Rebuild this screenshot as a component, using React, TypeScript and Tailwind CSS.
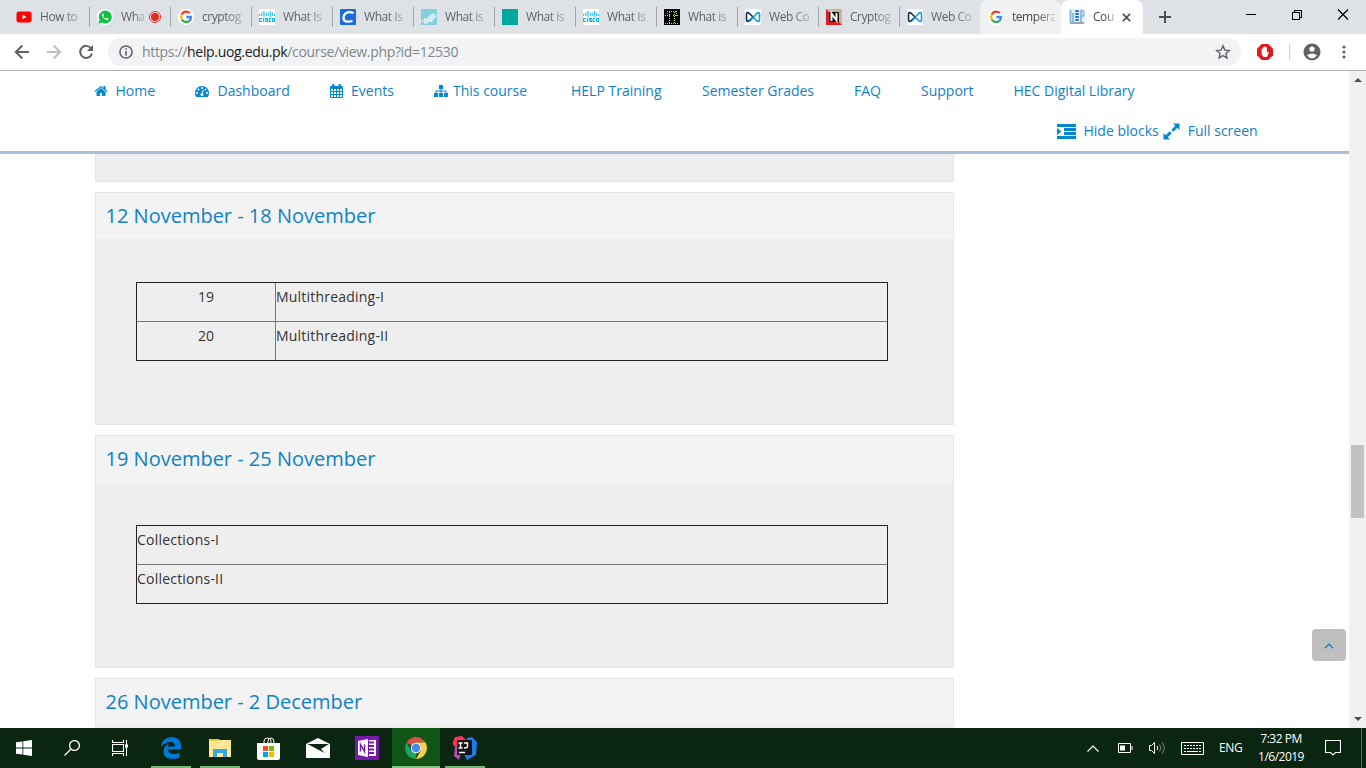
import React from "react";

const G = () => (
  <svg width="16" height="16" viewBox="0 0 16 16" className="shrink-0">
    <circle cx="8" cy="8" r="8" fill="#fff" />
    <g fill="none" strokeWidth="2.3">
      <path d="M11.7 4.1A5 5 0 0 0 3.7 5.5" stroke="#ea4335" />
      <path d="M3.7 5.5A5 5 0 0 0 3.7 10.5" stroke="#fbbc05" />
      <path d="M3.7 10.5A5 5 0 0 0 11.3 11.8" stroke="#34a853" />
      <path d="M11.3 11.8A5 5 0 0 0 13 8H8.3" stroke="#4285f4" />
    </g>
  </svg>
);
const Cisco = () => (
  <svg width="16" height="16" viewBox="0 0 16 16" className="shrink-0">
    <rect width="16" height="16" fill="#fff" />
    <path d="M.7 5v2M2.9 3.5V7M5 2v6M7.200 3.500V7M9.200 3.500V7M11.300 2v6M13.300 3.500V7M15.400 5v2" stroke="#10b4e0" strokeWidth="1" />
    <path d="M3 9.500H.700v3H3M4.700 9v4M9 9.500H6.700v1.500H8.500v1.500H6.300M12 9.500h-1.800v3H12M13.500 9.500h2v3h-2z" stroke="#10b4e0" strokeWidth="1.200" fill="none" />
  </svg>
);
const Web = () => (
  <svg width="16" height="16" viewBox="0 0 16 16" className="shrink-0">
    <rect width="16" height="16" fill="#fff" />
    <path d="M8 8 4.500 4.500Q1.500 2.500 1.500 5v6q0 2.500 3 .5L8 8" stroke="#0c2f55" strokeWidth="1.600" fill="none" />
    <path d="M5 12 11.500 4.500Q14.500 2.500 14.500 5v6q0 2.500-3 .5L8 8" stroke="#189bd7" strokeWidth="1.600" fill="none" />
  </svg>
);
const YT = () => (
  <svg width="16" height="16" viewBox="0 0 16 16" className="shrink-0">
    <rect x=".5" y="2.500" width="15" height="11" rx="2.500" fill="#f00" />
    <path d="M6.500 5.700v4.600L10.500 8z" fill="#fff" />
  </svg>
);
const WA = () => (
  <svg width="16" height="16" viewBox="0 0 16 16" className="shrink-0">
    <circle cx="8" cy="8" r="8" fill="#fff" />
    <path d="M1.500 14.500 2.600 11A6.500 6.500 0 1 1 5.200 13.600z" fill="#12c143" />
    <path d="M5.800 4.600c-1.600 1.200-.5 3.300 1.200 5s3.600 2.400 4.500 1l-.1-1-1.700-.8-1 .9c-1.200-.4-2.100-1.300-2.500-2.400l.8-.8-.7-1.800z" fill="#fff" />
  </svg>
);
const CIcon = () => (
  <svg width="16" height="16" viewBox="0 0 16 16" className="shrink-0">
    <rect width="16" height="16" rx="1" fill="#1b6ddb" />
    <path d="M13.500 4C8 1.800 4 4 3.500 8.500c-.3 4 3.500 5 9 3.500" stroke="#fff" strokeWidth="2.300" fill="none" />
  </svg>
);
const Wave = () => (
  <svg width="16" height="16" viewBox="0 0 16 16" className="shrink-0">
    <rect width="16" height="16" rx="1" fill="#84d0dc" />
    <path d="M1.500 11.500v1M3.800 10v4M6 9.500V14M8 8v4.500M10 6v6.500M12 5v6M14 6v2.500" stroke="#fff" strokeWidth="1.300" strokeLinecap="round" fill="none" />
  </svg>
);
const Teal = () => <span className="h-4 w-4 shrink-0 bg-[#00a99d]" />;
const Dots = () => (
  <svg width="16" height="16" viewBox="0 0 16 16" className="shrink-0">
    <rect width="16" height="16" fill="#000" />
    <g stroke="#c9dc2b" strokeWidth="1" strokeDasharray="1 1" fill="none">
      <path d="M3 2.500h10M1 6.500h5M9 6.500h6M1 14.500h14M5.500 3v11M10.500 3v11M12.500 2v5M3.500 2v5" />
    </g>
  </svg>
);
const NIcon = () => (
  <svg width="16" height="16" viewBox="0 0 16 16" className="shrink-0">
    <rect width="16" height="16" fill="#c9b69d" />
    <path d="M0 0v16h16z" fill="#d8202a" />
    <rect x="3" y="3" width="10" height="10" fill="#111" />
    <path d="M5.500 12V4.500l5 7V4" stroke="#fff" strokeWidth="2" fill="none" />
  </svg>
);
const Help = () => (
  <svg width="16" height="16" viewBox="0 0 16 16" className="shrink-0">
    <rect width="16" height="14" fill="#e4f1fc" />
    <path d="M1.500 1v12M4 4v9M12 1v12" stroke="#79baf3" strokeWidth="1.800" />
    <path d="M12 2h2.500v5H12" stroke="#79baf3" strokeWidth="1.500" fill="none" />
    <path d="M8 1v12" stroke="#2277bd" strokeWidth="3.500" strokeDasharray="2 1" />
    <path d="M1 14h14" stroke="#7d8790" strokeWidth="1.500" />
  </svg>
);

const tabs: { icon: () => React.JSX.Element; text: string; rec?: boolean }[] = [
  { icon: YT, text: "How to" },
  { icon: WA, text: "Wha", rec: true },
  { icon: G, text: "cryptog" },
  { icon: Cisco, text: "What Is" },
  { icon: CIcon, text: "What Is" },
  { icon: Wave, text: "What is" },
  { icon: Teal, text: "What is" },
  { icon: Cisco, text: "What Is" },
  { icon: Dots, text: "What is" },
  { icon: Web, text: "Web Co" },
  { icon: NIcon, text: "Cryptog" },
  { icon: Web, text: "Web Co" },
];

const Label = ({ children, w }: { children: React.ReactNode; w: string }) => (
  <span className={`ml-2 shrink-0 whitespace-nowrap text-[12px] leading-4 tracking-[-0.45px] [mask-image:linear-gradient(to_right,#000_55%,rgba(0,0,0,0.25)_100%)] ${w}`}>
    {children}
  </span>
);

const TabStrip = () => (
  <div className="flex h-[34px] bg-[#dee1e6] pl-2 text-[#5f6368]">
    {tabs.map(({ icon: Icon, text, rec }, i) => (
      <div key={i} className="flex h-[34px] w-[81px] shrink-0 items-center pl-2">
        <Icon />
        <Label w={rec ? "w-[23px]" : "w-[42px]"}>{text}</Label>
        {rec && (
          <svg width="14" height="14" viewBox="0 0 14 14" className="ml-[4px] shrink-0">
            <circle cx="7" cy="7" r="5.500" fill="#fff" stroke="#d93025" />
            <circle cx="7" cy="7" r="4.200" fill="#d93025" />
          </svg>
        )}
        {i < 11 && <span className="ml-auto -mr-px h-5 w-px shrink-0 bg-[#a0a4a9]" />}
      </div>
    ))}
    <div className="flex h-[34px] w-[81px] shrink-0 items-center rounded-t-lg bg-[#eff1f3] pl-2 text-[#45494d]">
      <G />
      <Label w="w-[43px]">tempera</Label>
    </div>
    <div className="flex h-[34px] w-[82px] shrink-0 items-center rounded-t-lg bg-white pl-2 text-[#45494d]">
      <Help />
      <Label w="w-[22px]">Cou</Label>
      <svg width="9" height="9" viewBox="0 0 10 10" className="ml-[7px]" stroke="#45494d" strokeWidth="1.700"><path d="M1 1l8 8M9 1 1 9" /></svg>
    </div>
    <svg width="12" height="12" viewBox="0 0 12 12" className="ml-4 mt-[11px]" stroke="#4b4f54" strokeWidth="2"><path d="M6 0v12M0 6h12" /></svg>
    <svg width="110" height="20" viewBox="0 0 110 20" className="ml-auto mr-[15px] mt-[5px]" fill="none" stroke="#000" shapeRendering="crispEdges">
      <path d="M5 9.500h10M51.500 7.500h7v7h-7zM53.500 7V5.500h7v7H59" />
      <path d="M97 4.500l10 10M107 4.500l-10 10" strokeWidth="1.200" shapeRendering="auto" />
    </svg>
  </div>
);

const Toolbar = () => (
  <div className="flex h-9 items-center bg-white pl-[14px]">
    <svg width="16" height="16" viewBox="0 0 16 16" fill="none" stroke="#5f6368" strokeWidth="2"><path d="M15 8H2M8.300 1.500 1.800 8l6.500 6.500" /></svg>
    <svg width="16" height="16" viewBox="0 0 16 16" fill="none" stroke="#bdc0c4" strokeWidth="2" className="ml-4"><path d="M1 8h13M7.700 1.500 14.200 8l-6.500 6.500" /></svg>
    <svg width="16" height="16" viewBox="0 0 16 16" fill="none" stroke="#5f6368" strokeWidth="2" className="ml-4"><path d="M13.200 4.500A6 6 0 1 0 14 9.500" /><path d="M15 1v6H9z" fill="#5f6368" stroke="none" /></svg>
    <div className="ml-[14px] flex h-7 w-[1133px] items-center rounded-full bg-[#f1f3f4] pl-[11px] pr-[10px]">
      <svg width="14" height="14" viewBox="0 0 14 14" fill="none" stroke="#5f6368" strokeWidth="1.500"><circle cx="7" cy="7" r="6.100" /><path d="M7 3.300v1.500M7 6v4.500" strokeWidth="1.600" /></svg>
      <span className="ml-[9px] whitespace-nowrap text-[14px] leading-5 tracking-[-0.33px] text-[#80868b]">https://<span className="text-[#202124]">help.uog.edu.pk</span>/course/view.php?id=12530</span>
      <svg width="16" height="16" viewBox="0 0 16 16" className="ml-auto" fill="none" stroke="#5f6368" strokeWidth="1.400"><path d="m8 1.800 1.800 4.300 4.600.4-3.500 3 1.100 4.600L8 11.600l-4 2.500 1.100-4.600-3.500-3 4.600-.4z" /></svg>
    </div>
    <svg width="16" height="16" viewBox="0 0 16 16" className="ml-4"><path d="M4.700 0h6.600L16 4.700v6.600L11.300 16H4.700L0 11.300V4.700z" fill="#e01b20" /><path d="M4.600 8.500V5q.8-.8 1.300 0v2V3.500q.7-.8 1.300 0V7 2.700q.8-.7 1.400 0V7 3.500q.7-.7 1.300 0V9l1.300-1.400q1 0 .6.800L10 13H6.500q-1.900-1.500-1.900-4.500z" fill="#fff" /></svg>
    <span className="ml-4 h-4 w-px bg-[#cdd0d4]" />
    <svg width="18" height="18" viewBox="0 0 18 18" className="ml-[13px]"><circle cx="9" cy="9" r="8.500" fill="#5f6368" /><circle cx="9" cy="6" r="2.600" fill="#fff" /><path d="M4 12.200q5-3.400 10 0-2 3-5 3t-5-3z" fill="#fff" /></svg>
    <svg width="4" height="14" viewBox="0 0 4 14" className="ml-[21px]" fill="#5f6368"><circle cx="2" cy="2" r="1.600" /><circle cx="2" cy="7" r="1.600" /><circle cx="2" cy="12" r="1.600" /></svg>
  </div>
);

const HomeI = () => (
  <svg width="14" height="14" viewBox="0 0 1792 1792" fill="#0388d1"><path d="M1472 992v480q0 26-19 45t-45 19h-384v-384h-256v384h-384q-26 0-45-19t-19-45v-480q0-1 .5-3t.5-3l575-474 575 474q1 2 1 6zm223-69l-62 74q-8 9-21 11h-3q-13 0-21-7l-692-577-692 577q-12 8-24 7-13-2-21-11l-62-74q-8-10-7-23.500t11-21.500l719-599q32-26 76-26t76 26l244 204v-195q0-14 9-23t23-9h192q14 0 23 9t9 23v408l219 182q10 8 11 21.500t-7 23.500z" /></svg>
);
const DashI = () => (
  <svg width="14" height="14" viewBox="0 0 1792 1792" fill="#0388d1"><path d="M384 1152q0-53-37.500-90.500t-90.500-37.500-90.500 37.500-37.500 90.500 37.500 90.500 90.500 37.500 90.500-37.500 37.500-90.500zm192-448q0-53-37.500-90.500t-90.500-37.500-90.500 37.500-37.500 90.500 37.500 90.500 90.500 37.500 90.500-37.500 37.500-90.500zm428 481l101-382q6-26-7.500-48.500t-38.500-29.500-48 6.500-30 39.500l-101 382q-60 5-107 43.500t-63 98.500q-20 77 20 146t117 89 146-20 89-117q16-60-6-117t-72-91zm660-33q0-53-37.500-90.500t-90.500-37.500-90.500 37.500-37.500 90.500 37.500 90.500 90.500 37.500 90.500-37.500 37.500-90.500zm-640-640q0-53-37.500-90.500t-90.500-37.500-90.500 37.500-37.500 90.500 37.500 90.500 90.500 37.500 90.500-37.500 37.500-90.500zm448 192q0-53-37.500-90.500t-90.500-37.500-90.500 37.500-37.500 90.500 37.500 90.500 90.500 37.500 90.500-37.500 37.500-90.500zm320 448q0 261-141 483-19 29-54 29h-1402q-35 0-54-29-141-221-141-483 0-182 71-348t191-286 286-191 348-71 348 71 286 191 191 286 71 348z" /></svg>
);
const CalI = () => (
  <svg width="13" height="14" viewBox="0 0 13 14" fill="#0388d1"><path fillRule="evenodd" d="M1 2h1V1q0-1 1.200-1T4.500 1v1h4V1q0-1 1.200-1T11 1v1h1q1 0 1 1v10q0 1-1 1H1q-1 0-1-1V3q0-1 1-1zM1 5v2h2V5zM4 5v2h2V5zM7 5v2h2V5zM10 5v2h2V5zM1 8v2h2V8zM4 8v2h2V8zM7 8v2h2V8zM10 8v2h2V8zM1 11v2h2v-2zM4 11v2h2v-2zM7 11v2h2v-2zM10 11v2h2v-2z" /></svg>
);
const SiteI = () => (
  <svg width="14" height="12" viewBox="0 0 14 12" fill="#0388d1"><path d="M5 0h4v4H7.500v1.500H12q.5 0 .5.500v2H14v4h-4V8h1.500V6.500h-4V8H9v4H5V8h1.500V6.500h-4V8H4v4H0V8h1.500V6q0-.5.500-.5h4.500V4H5z" /></svg>
);

const Nav = () => (
  <header className="h-[83px] border-b-[3px] border-[#a9c1d6] bg-white text-[14px] leading-5 text-[#0f82c6]">
    <nav className="flex h-10 items-center whitespace-nowrap pl-[93.500px]">
      <div className="flex w-[101px] items-center"><HomeI /><span className="ml-2">Home</span></div>
      <div className="flex w-[135px] items-center"><DashI /><span className="ml-[9px]">Dashboard</span></div>
      <div className="flex w-[104.500px] items-center"><CalI /><span className="ml-[8.500px]">Events</span></div>
      <div className="flex w-[137px] items-center"><SiteI /><span className="ml-[5px]">This course</span></div>
      <span className="w-[131px]">HELP Training</span>
      <span className="w-[152px]">Semester Grades</span>
      <span className="w-[67px]">FAQ</span>
      <span className="w-[92.500px]">Support</span>
      <span>HEC Digital Library</span>
    </nav>
    <div className="flex h-10 items-center whitespace-nowrap pl-[1056.500px]">
      <svg width="19" height="15" viewBox="0 0 19 15" fill="#0388d1"><path d="M0 0h19v3H0zM7 4h12v3H7zM7 8h12v3H7zM0 12h19v3H0zM0 4l4.500 3.500L0 11z" /></svg>
      <span className="ml-2">Hide blocks</span>
      <svg width="17" height="17" viewBox="0 0 17 17" fill="#0388d1" className="ml-1"><path d="M10 .500h6.500V7l-2.200-2.200-4 4-2-2 4-4zM7 16.500H.500V10l2.200 2.200 4-4 2 2-4 4z" /></svg>
      <span className="ml-2">Full screen</span>
    </div>
  </header>
);

const Section = ({ title, rows }: { title: string; rows: string[][] }) => (
  <section className="mb-[10px] h-[233px] w-[859px] shrink-0 border border-[#e6e6e6] bg-[#eee]">
    <h3 className="flex h-[46px] items-center bg-[#f3f3f3] pl-[9.500px] text-[20px] leading-6 text-[#0f82c6]">{title}</h3>
    <div className="ml-[40px] mt-[43px] w-[752px] border border-[#222] text-[14px] text-[#333]">
      {rows.map((r, i) => (
        <div key={i} className={i ? "flex h-[39px] border-t border-[#777]" : "flex h-[38px]"}>
          {r.length > 1 && <span className="w-[139px] border-r border-[#777] pt-1 text-center leading-5">{r[0]}</span>}
          <span className="pt-1 leading-5 tracking-[0.21px]">{r[r.length - 1]}</span>
        </div>
      ))}
    </div>
  </section>
);

const Page = () => (
  <div className="flex h-[657px] bg-white">
    <div className="relative flex w-[1349px] flex-col">
      <Nav />
      <main className="flex h-[574px] flex-col overflow-hidden pl-[95px]">
        <div className="mb-[10px] h-7 w-[859px] shrink-0 border border-t-0 border-[#e6e6e6] bg-[#eee]" />
        <Section title="12 November - 18 November" rows={[["19", "Multithreading-I"], ["20", "Multithreading-II"]]} />
        <Section title="19 November - 25 November" rows={[["Collections-I"], ["Collections-II"]]} />
        <Section title="26 November - 2 December" rows={[]} />
      </main>
      <button className="absolute right-[3px] bottom-[67px] flex h-8 w-[34px] items-center justify-center rounded bg-[#bfbfbf]">
        <svg width="10" height="6" viewBox="0 0 10 6" fill="none" stroke="#0f82c6" strokeWidth="1.300" className="mt-[2px]"><path d="M1 5.200 5 1.200l4 4" /></svg>
      </button>
    </div>
    <div className="flex w-[17px] flex-col items-center bg-[#f1f1f1]">
      <svg width="8" height="4" viewBox="0 0 8 4" className="mt-[7px]" fill="#505050"><path d="M0 4 4 0l4 4z" /></svg>
      <div className="mt-[363px] h-[73px] w-[13px] bg-[#c1c1c1]" />
      <svg width="8" height="4" viewBox="0 0 8 4" className="mb-[7px] mt-auto" fill="#505050"><path d="M0 0 4 4l4-4z" /></svg>
    </div>
  </div>
);

const TaskItem = ({ children, on, active, w = "w-[49px]" }: { children: React.ReactNode; on?: boolean; active?: boolean; w?: string }) => (
  <div className={`flex h-10 shrink-0 flex-col items-center ${w} ${active ? "bg-[#115516]" : ""}`}>
    <div className="flex h-[38px] items-center justify-center pt-[2px]">{children}</div>
    {on && <span className={active ? "h-[2px] w-full bg-[#86c585]" : "h-[2px] w-10 bg-[#76b976]"} />}
  </div>
);

const Taskbar = () => (
  <footer className="flex h-10 bg-[#0a2610] text-white">
    <TaskItem w="w-12"><svg width="16" height="16" viewBox="0 0 16 16" fill="#fff"><path d="M0 2.300 6.500 1.400V7.600H0zM7.300 1.300 16 0v7.600H7.300zM0 8.400h6.500v6.200L0 13.700zM7.300 8.400H16V16l-8.700-1.300z" /></svg></TaskItem>
    <TaskItem w="w-12"><svg width="16" height="16" viewBox="0 0 16 16" fill="none" stroke="#fff" strokeWidth="1.300"><circle cx="10.500" cy="5.500" r="4.900" /><path d="M7 9 .500 15.500" /></svg></TaskItem>
    <TaskItem w="w-12"><svg width="17" height="16" viewBox="0 0 17 16" fill="none" stroke="#fff" strokeWidth="1.100"><path d="M.500 0v2.500h11V0M.500 16v-2.500h11V16M.500 4.500h11v7H.500zM14.500 0v16" /><path d="M13 4.500h3v3h-3z" fill="#fff" stroke="none" /></svg></TaskItem>
    <TaskItem on w="w-[54px]"><svg width="20" height="22" viewBox="0 0 20 22" fill="#0078d7"><path d="M0 10Q1 0 11 0q9 0 9 10v2.500H7q.5 4.500 6 4.500 3.500 0 5.500-1.500v4.700Q16 22 12 22 2 22 2.500 14q.3-5 6-7.800Q6.800 7.500 6.700 9.500H14q0-4.500-4.300-4.500Q3.500 5 0 10z" /></svg></TaskItem>
    <TaskItem on w="w-11"><svg width="22" height="18" viewBox="0 0 22 18"><path d="M0 0h9l2 1h11v17H0z" fill="#ffe694" /><path d="M1 0h7l1.500 1.800H1z" fill="#f5b92e" /><path d="M4 18v-8h14v8h-4v-4H8v4z" fill="#35a9df" /></svg></TaskItem>
    <TaskItem w="w-[52px]"><svg width="23" height="23" viewBox="0 0 23 23"><path d="M7 7V4q0-3 3.500-3T14 4v3M11 7V4q0-3 3-3 3 0 3 4v2" fill="none" stroke="#fff" /><path d="M0 6h23v15q0 2-2 2H2q-2 0-2-2z" fill="#fff" /><path d="M6 9h5v5H6z" fill="#f25022" /><path d="M12 9h5v5h-5z" fill="#7fba00" /><path d="M6 15h5v5H6z" fill="#00a4ef" /><path d="M12 15h5v5h-5z" fill="#ffb900" /></svg></TaskItem>
    <TaskItem w="w-[48px]"><svg width="24" height="20" viewBox="0 0 24 20" fill="#fff"><path d="M0 6 12 0l12 6v14H0z" /><path d="M1.500 6H23l-8 5 3.500 4z" fill="#0a2610" /></svg></TaskItem>
    <TaskItem w="w-[50px]"><svg width="24" height="24" viewBox="0 0 24 24"><rect width="24" height="24" fill="#7719aa" /><path d="m3 5 10-2v18L3 19z" fill="#fff" /><path d="M5.500 15.500v-7l4 7v-7" stroke="#7719aa" strokeWidth="1.500" fill="none" /><path d="M14 4h7v16h-7v-2h5v-2h-5v-1.500h5v-2h-5V11h5V9h-5V7.500h5v-2h-5z" fill="#fff" /></svg></TaskItem>
    <TaskItem on active w="w-[48px]"><svg width="22" height="22" viewBox="0 0 22 22"><path d="M11 11 1.500 5.500A11 11 0 0 1 20.500 5.500H11z" fill="#dd5144" /><path d="M11 11v11A11 11 0 0 1 1.500 5.500L6.200 13.700z" fill="#1da362" /><path d="M11 22a11 11 0 0 0 9.500-16.500H11l4.800 8.200z" fill="#ffcd46" /><circle cx="11" cy="11" r="5.200" fill="#f1f1f1" /><circle cx="11" cy="11" r="4.200" fill="#4688f1" /></svg></TaskItem>
    <TaskItem on w="w-[50px]"><svg width="24" height="24" viewBox="0 0 24 24"><path d="m2 1 7-1 5 5-9 8-6-5z" fill="#fe3159" /><path d="M2 11h8L6 24l-5-4z" fill="#b24bb5" /><path d="m14 2 5-1 5 5-1 13-9 5-3-6z" fill="#187cf0" /><path d="M4 4h15v15H4z" fill="#151515" /><path d="M5.500 7h4M7.500 7v5M5.500 12h4M11 7h3.500v3.500q0 1.500-3.500 1.500M6 16.500h6" stroke="#fff" strokeWidth="1.400" fill="none" /></svg></TaskItem>
    <div className="ml-auto flex h-10 items-center">
      <svg width="12" height="7" viewBox="0 0 12 7" fill="none" stroke="#fff" strokeWidth="1.200"><path d="M.500 6.500 6 1l5.500 5.500" /></svg>
      <svg width="15" height="10" viewBox="0 0 15 10" className="ml-[19px]" fill="none" stroke="#fff"><path d="M.500.500h12v9H.500zM14 3v4" /><path d="M2 2.500h5v5H2z" fill="#fff" stroke="none" /></svg>
      <svg width="17" height="14" viewBox="0 0 17 14" className="ml-4" fill="none" stroke="#fff"><path d="M.500 4.500h2l3-3v11l-3-3h-2zM8 5q1.500 2 0 4" /><path d="M10.500 3.500q3 3.500 0 7M13 1.500q4.500 5.500 0 11" opacity=".45" /></svg>
      <svg width="23" height="13" viewBox="0 0 23 13" className="ml-[15px]" fill="none" stroke="#fff"><path d="M.500.500h22v12H.500z" /><path d="M3 3.500h18M3 6.500h18" strokeDasharray="2 1" /><path d="M3 9.500h2M6 9.500h11M18 9.500h2" /></svg>
      <span className="ml-[15px] w-[24px] whitespace-nowrap text-[12px] tracking-[-0.4px]">ENG</span>
      <div className="ml-[13px] w-[50px] whitespace-nowrap text-center text-[12px] leading-[18px] tracking-[-0.5px]">7:32 PM<br />1/6/2019</div>
      <svg width="16" height="16" viewBox="0 0 16 16" className="ml-[19px]" fill="none" stroke="#fff" strokeWidth="1.100"><path d="M.500.500h15v12h-5L8 15l-2.500-2.500h-5z" /></svg>
      <span className="ml-5 mr-1 h-10 w-px bg-[#58705c]" />
    </div>
  </footer>
);

export default function App() {
  return (
    <div className="h-[768px] w-[1366px] overflow-hidden bg-white font-['Open_Sans','Noto_Sans',sans-serif]">
      <TabStrip />
      <Toolbar />
      <div className="h-px bg-[#b4b4b4]" />
      <Page />
      <Taskbar />
    </div>
  );
}
